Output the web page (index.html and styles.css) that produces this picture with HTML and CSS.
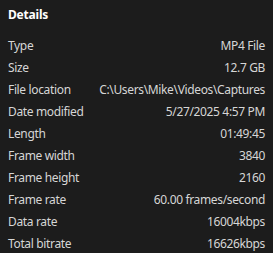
FILE: index.html
```html
<!DOCTYPE html>
<html>
<head>
<meta charset="utf-8">
<link rel="stylesheet" href="styles.css">
</head>
<body>
<div class="panel">
  <div class="title">Details</div>
  <div class="rows">
    <div class="row"><span class="k">Type</span><span class="v">MP4 File</span></div>
    <div class="row"><span class="k">Size</span><span class="v">12.7 GB</span></div>
    <div class="row"><span class="k">File location</span><span class="v">C:\Users\Mike\Videos\Captures</span></div>
    <div class="row"><span class="k">Date modified</span><span class="v">5/27/2025 4:57 PM</span></div>
    <div class="row"><span class="k">Length</span><span class="v">01:49:45</span></div>
    <div class="row"><span class="k">Frame width</span><span class="v">3840</span></div>
    <div class="row"><span class="k">Frame height</span><span class="v">2160</span></div>
    <div class="row"><span class="k">Frame rate</span><span class="v">60.00 frames/second</span></div>
    <div class="row"><span class="k">Data rate</span><span class="v">16004kbps</span></div>
    <div class="row"><span class="k">Total bitrate</span><span class="v">16626kbps</span></div>
  </div>
</div>
</body>
</html>
```
FILE: styles.css
```css
html, body {
  margin: 0;
  padding: 0;
  background: #1c1c1c;
}
.panel {
  width: 273px;
  height: 253px;
  box-sizing: border-box;
  padding: 6px 8px 0 8px;
  font-family: "Noto Sans", "Open Sans", sans-serif;
  font-size: 12px;
  letter-spacing: -0.35px;
  color: #d6d6d6;
}
.title {
  font-weight: 700;
  color: #ffffff;
  height: 18px;
  line-height: 18px;
  margin-bottom: 11px;
  letter-spacing: -0.2px;
}
.rows {
  display: flex;
  flex-direction: column;
}
.row {
  display: flex;
  justify-content: space-between;
  height: 22px;
  line-height: 22px;
  white-space: nowrap;
}
```
